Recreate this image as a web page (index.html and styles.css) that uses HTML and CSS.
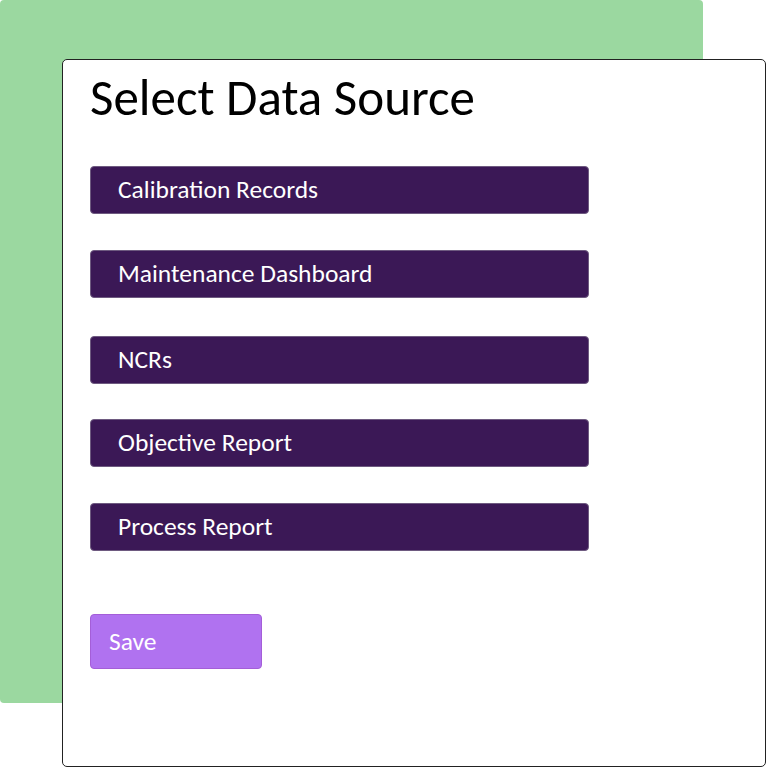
FILE: index.html
```html
<!DOCTYPE html>
<html lang="en">
<head>
  <meta charset="UTF-8">
  <title>Select Data Source</title>
  <link rel="stylesheet" href="styles.css">
</head>
<body>
  <div class="stage">
    <div class="backdrop"></div>
    <div class="card">
      <h1>Select Data Source</h1>
      <div class="sources">
        <button class="source">Calibration Records</button>
        <button class="source">Maintenance Dashboard</button>
        <button class="source">NCRs</button>
        <button class="source">Objective Report</button>
        <button class="source">Process Report</button>
      </div>
      <button class="save">Save</button>
    </div>
  </div>
</body>
</html>
```

FILE: styles.css
```css
body { margin: 0; background: #fff; font-family: Carlito, Calibri, "Open Sans", "Noto Sans", sans-serif; }
.stage { display: grid; width: 768px; height: 768px; }
.backdrop { grid-area: 1 / 1; width: 703px; height: 703px; background: #9bd8a0; border-radius: 4px; }
.card { grid-area: 1 / 1; box-sizing: border-box; margin: 59px 0 0 62px; width: 704px; height: 708px; background: #fff; border: 1px solid #222; border-radius: 5px; padding: 0 0 0 27px; }
h1 { margin: 13px 0 0; font-size: 51px; font-weight: normal; line-height: 50px; color: #000; }
.sources { display: flex; flex-direction: column; gap: 36px; margin-top: 43px; width: 499px; }
.source { display: flex; align-items: center; height: 48px; padding: 0 0 1px 27px; background: #3b1856; color: #fff; border: 1px solid #6e5a80; border-radius: 4px; font: inherit; font-size: 25.5px; text-align: left; }
.source:nth-child(3) { margin-top: 2px; }
.source:nth-child(4) { margin-top: -1px; }
.save { display: flex; align-items: center; margin-top: 63px; width: 172px; height: 55px; padding: 0 0 0 18px; background: #b072f0; color: #fff; border: 1px solid #a45ed8; border-radius: 4px; font: inherit; font-size: 25.5px; }
```
